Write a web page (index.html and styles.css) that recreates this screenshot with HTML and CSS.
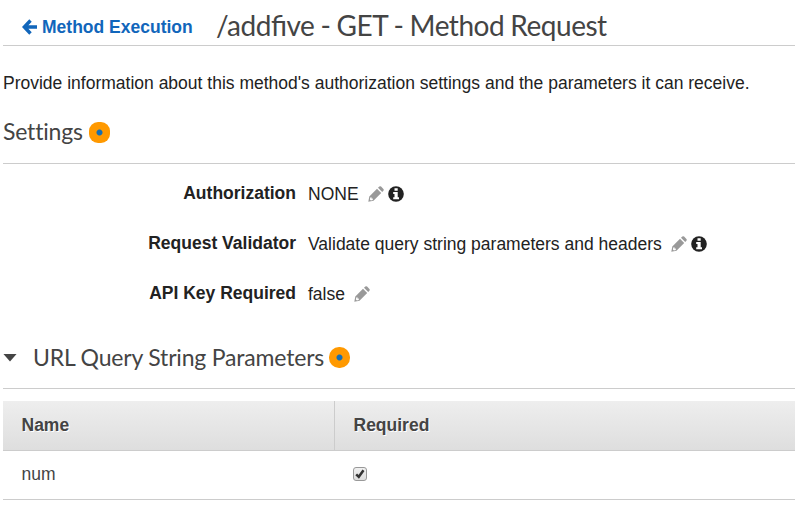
FILE: index.html
```html
<!DOCTYPE html>
<html lang="en">
<head>
<meta charset="utf-8">
<title>Method Request</title>
<link rel="stylesheet" href="styles.css">
</head>
<body>
<svg class="defs" width="0" height="0">
  <symbol id="pencil" viewBox="0 0 16 16"><path fill-rule="evenodd" d="M.3 15.700l1-5.200L9 2.800l4.200 4.200-7.700 7.700zM2.300 11.500l-.4 2.100 1 .8 1.900-.5v-1.400H3.500v-1.200zM10 1.800L11.300.6q.9-.8 1.800 0l2.300 2.300q.8.900 0 1.800L14.200 6z"/></symbol>
  <symbol id="info" viewBox="0 0 16 16"><circle cx="8" cy="8" r="7.800"/><path fill="#fff" d="M6.500 2.200h3.200v2.500H6.500zM5.200 6h4.500v5.200h1.300v2.100H5.200v-2.100h1.300V8H5.200z"/></symbol>
</svg>
<header class="head">
  <a class="back"><svg class="arrow" viewBox="0 0 16 16"><path d="M8.500 1.500L2.300 8l6.200 6.500M3 8h12"/></svg>Method Execution</a>
  <h1>/addfive - GET - Method Request</h1>
</header>
<p class="intro">Provide information about this method's authorization settings and the parameters it can receive.</p>
<section class="settings">
  <h2 class="title">Settings<i class="dot"></i></h2>
  <dl>
    <dt>Authorization</dt><dd><span>NONE</span><svg class="pencil"><use href="#pencil"/></svg><svg class="info"><use href="#info"/></svg></dd>
    <dt>Request Validator</dt><dd><span>Validate query string parameters and headers</span><svg class="pencil"><use href="#pencil"/></svg><svg class="info"><use href="#info"/></svg></dd>
    <dt>API Key Required</dt><dd><span>false</span><svg class="pencil"><use href="#pencil"/></svg></dd>
  </dl>
</section>
<section class="params">
  <h2 class="title"><i class="caret"></i>URL Query String Parameters<i class="dot"></i></h2>
  <table>
    <thead><tr><th class="name">Name</th><th>Required</th></tr></thead>
    <tbody><tr><td>num</td><td><span class="check"><svg viewBox="0 0 12 12"><path d="M2.200 6.300l2.600 2.500 4.700-6.500"/></svg></span></td></tr></tbody>
  </table>
</section>
</body>
</html>
```

FILE: styles.css
```css
* { box-sizing: border-box; }
body { margin: 0; padding-left: 3px; height: 517px; overflow: hidden; background: #fff; color: #222; font: 17.5px/24px "Liberation Sans", Arial, sans-serif; }
.defs { display: block; height: 0; }
h1, h2, p, dl, dd { margin: 0; }
.head { display: flex; height: 46px; border-bottom: 1px solid #ccc; }
.back { display: flex; align-items: center; width: 213px; height: 54px; padding-left: 19px; color: #1166bb; font-weight: bold; white-space: nowrap; }
.arrow { width: 16px; height: 16px; margin-right: 4px; fill: none; stroke: #1166bb; stroke-width: 3.400; }
h1 { font: 400 28px/51px Lato, sans-serif; letter-spacing: -.47px; word-spacing: -.6px; font-feature-settings: "liga" 1; color: #444; white-space: nowrap; }
.intro { margin-top: 25px; white-space: nowrap; }
.title { display: flex; align-items: center; font: 400 23px/30px Lato, sans-serif; letter-spacing: -.18px; color: #444; white-space: nowrap; }
.dot { width: 21px; height: 21px; margin-left: 6px; border-radius: 9px; background: radial-gradient(circle, #146eb4 0 2.500px, #f90 3.500px); }
.settings .title { height: 69px; padding-top: 4px; border-bottom: 1px solid #ccc; }
.settings .dot { margin-top: 3px; }
dl { display: grid; grid-template-columns: 293px 1fr; grid-auto-rows: 50px; column-gap: 12px; padding-top: 5px; }
dt { line-height: 49px; font-weight: bold; text-align: right; }
dd { display: flex; align-items: center; white-space: nowrap; }
.pencil { width: 16px; height: 16px; margin-left: 9px; fill: #999; }
.info { width: 16px; height: 16px; margin-left: 4px; fill: #222; }
.params .title { height: 70px; border-bottom: 1px solid #ccc; padding-top: 6px; }
.params .dot { margin: 2px 0 0 5px; border-radius: 10px; }
.caret { width: 14px; height: 8px; margin: 2px 16px 0 0; background: #444; clip-path: polygon(0 0, 100% 0, 50% 100%); }
table { width: 100%; margin-top: 12px; border-collapse: separate; border-spacing: 0; }
th, td { height: 49px; padding: 0 18.500px 3px; border-bottom: 1px solid #ccc; text-align: left; color: #444; }
th { height: 50px; padding-bottom: 2px; background: linear-gradient(#eee, #dedede); text-shadow: 1px 1px #fff; }
.name { width: 332px; border-right: 1px solid #ccc; }
.check { display: block; width: 14px; height: 14px; margin: 0 0 0 -1px; border: 1px solid #999; border-radius: 3px; background: linear-gradient(#f0f0f0, #ddd); }
.check svg { display: block; width: 12px; height: 12px; fill: none; stroke: #333; stroke-width: 2.500; }
```
